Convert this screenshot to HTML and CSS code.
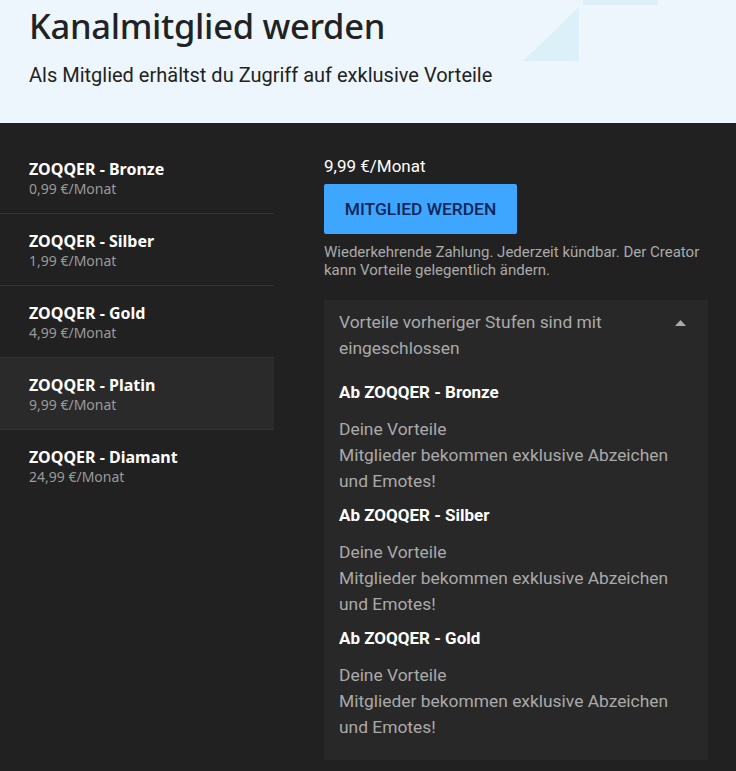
FILE: index.html
```html
<!DOCTYPE html>
<html lang="de">
<head>
    <meta charset="UTF-8">
    <title>Kanalmitglied werden</title>
    <link rel="stylesheet" href="styles.css">
</head>
<body>
    <header class="hero">
        <h1>Kanalmitglied werden</h1>
        <p>Als Mitglied erhältst du Zugriff auf exklusive Vorteile</p>
        <!-- Deko oben rechts -->
        <span class="deco-band"></span>
        <svg class="deco-tri" width="56" height="54" viewBox="0 0 56 54">
            <polygon points="56,0 56,54 0,54" fill="#dcf0fa"/>
        </svg>
    </header>

    <main class="membership">
        <nav class="tiers">
            <div class="tier">
                <div class="tier-name">ZOQQER - Bronze</div>
                <div class="tier-price">0,99 €/Monat</div>
            </div>
            <div class="tier">
                <div class="tier-name">ZOQQER - Silber</div>
                <div class="tier-price">1,99 €/Monat</div>
            </div>
            <div class="tier">
                <div class="tier-name">ZOQQER - Gold</div>
                <div class="tier-price">4,99 €/Monat</div>
            </div>
            <div class="tier active">
                <div class="tier-name">ZOQQER - Platin</div>
                <div class="tier-price">9,99 €/Monat</div>
            </div>
            <div class="tier">
                <div class="tier-name">ZOQQER - Diamant</div>
                <div class="tier-price">24,99 €/Monat</div>
            </div>
        </nav>

        <section class="detail">
            <div class="price">9,99 €/Monat</div>
            <button class="join">MITGLIED WERDEN</button>
            <p class="note">Wiederkehrende Zahlung. Jederzeit kündbar. Der Creator kann Vorteile gelegentlich ändern.</p>

            <div class="perks">
                <div class="perks-head">
                    <span>Vorteile vorheriger Stufen sind mit eingeschlossen</span>
                    <svg class="caret" width="11" height="6" viewBox="0 0 11 6">
                        <polygon points="0,6 5.5,0 11,6" fill="#aaaaaa"/>
                    </svg>
                </div>

                <div class="perk">
                    <h3>Ab ZOQQER - Bronze</h3>
                    <p>Deine Vorteile<br>Mitglieder bekommen exklusive Abzeichen und Emotes!</p>
                </div>
                <div class="perk">
                    <h3>Ab ZOQQER - Silber</h3>
                    <p>Deine Vorteile<br>Mitglieder bekommen exklusive Abzeichen und Emotes!</p>
                </div>
                <div class="perk">
                    <h3>Ab ZOQQER - Gold</h3>
                    <p>Deine Vorteile<br>Mitglieder bekommen exklusive Abzeichen und Emotes!</p>
                </div>
            </div>
        </section>
    </main>
</body>
</html>
```

FILE: styles.css
```css
html, body {
    margin: 0;
    padding: 0;
    height: 100%;
    background-color: #212121;
}
body {
    font-family: Roboto, Arial, sans-serif;
    display: flex;
    flex-direction: column;
}
.hero {
    position: relative;
    height: 123px;
    box-sizing: border-box;
    padding: 3px 29px 0;
    background-color: #eef6fd;
    overflow: hidden;
    flex-shrink: 0;
}
.hero h1 {
    margin: 0;
    font-family: "Noto Sans", sans-serif;
    font-weight: 500;
    font-size: 34.5px;
    line-height: 46px;
    color: #1f2326;
    letter-spacing: -0.3px;
}
.hero p {
    margin: 13px 0 0;
    font-size: 20px;
    line-height: 26px;
    color: #222;
}
.deco-band {
    position: absolute;
    top: 0;
    left: 583px;
    width: 75px;
    height: 5px;
    background-color: #dcf0fa;
}
.deco-tri {
    position: absolute;
    top: 7px;
    left: 523px;
}
.membership {
    flex: 1;
    display: flex;
    gap: 50px;
    background-color: #212121;
}
.tiers {
    width: 274px;
    padding-top: 19px;
    flex-shrink: 0;
}
.tier {
    height: 72px;
    box-sizing: border-box;
    padding: 17px 0 0 29px;
    border-bottom: 1px solid #333;
}
.tier:last-child {
    border-bottom: none;
}
.tier.active {
    background-color: #2a2a2a;
}
.tier-name {
    font-family: "Noto Sans", sans-serif;
    font-weight: 700;
    font-size: 16px;
    line-height: 20px;
    color: #fff;
}
.tier-price {
    font-family: "Noto Sans", sans-serif;
    font-size: 14px;
    line-height: 20px;
    color: #9a9a9a;
}
.detail {
    width: 384px;
    padding-top: 32px;
}
.price {
    font-size: 17px;
    line-height: 22px;
    color: #fff;
}
.join {
    display: block;
    margin-top: 7px;
    width: 193px;
    height: 50px;
    border: none;
    border-radius: 2px;
    background-color: #3ea6ff;
    color: #0c2557;
    font-family: Roboto, sans-serif;
    font-weight: 500;
    font-size: 17.4px;
    cursor: pointer;
}
.note {
    margin: 9px 0 0;
    font-size: 15px;
    line-height: 18px;
    color: #aaa;
}
.perks {
    margin-top: 21px;
    padding: 9px 15px 20px;
    background-color: #282828;
}
.perks-head {
    display: flex;
    justify-content: space-between;
    align-items: flex-start;
    font-size: 17.4px;
    line-height: 26px;
    color: #aaa;
}
.perks-head span {
    width: 300px;
}
.caret {
    margin: 11px 7px 0 0;
}
.perk h3 {
    margin: 10px 0 0;
    font-size: 17px;
    font-weight: 700;
    line-height: 22px;
    color: #fff;
}
.perks-head + .perk h3 {
    margin-top: 20px;
}
.perk p {
    margin: 13px 0 0;
    font-size: 17.4px;
    line-height: 26px;
    color: #aaa;
}
```
